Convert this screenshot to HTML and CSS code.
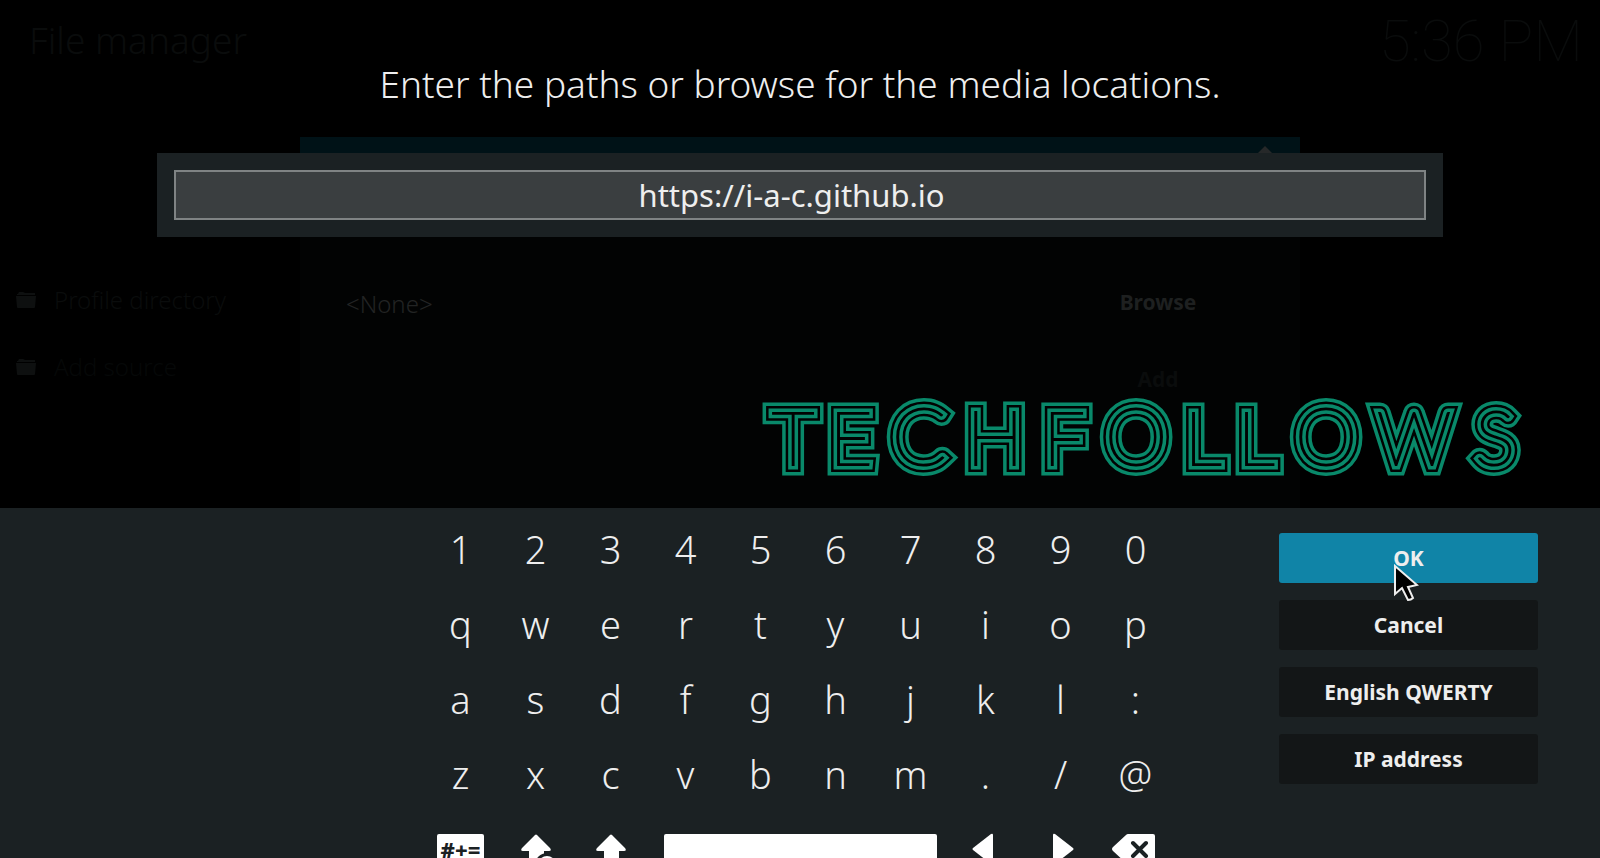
FILE: index.html
```html
<!DOCTYPE html>
<html lang="en">
<head>
    <meta charset="UTF-8">
    <meta name="viewport" content="width=device-width, initial-scale=1.0">
    <title>File manager</title>
    <link rel="stylesheet" href="styles.css">
</head>
<body>
    <!-- Dimmed file manager behind the keyboard -->
    <div class="backdrop">
        <header class="topbar">
            <div class="page-title">File manager</div>
            <div class="clock">5:36 PM</div>
        </header>
        <div class="files">
            <div class="file">
                <svg class="folder" viewBox="0 0 20 16"><path d="M2 2L3 0H7L9 1H19V3H1V2ZM0 4H20L19 15Q19 16 18 16H2Q1 16 1 15Z"/></svg>
                Profile directory
            </div>
            <div class="file dimmer">
                <svg class="folder" viewBox="0 0 20 16"><path d="M2 2L3 0H7L9 1H19V3H1V2ZM0 4H20L19 15Q19 16 18 16H2Q1 16 1 15Z"/></svg>
                Add source
            </div>
        </div>
        <div class="source-dialog">
            <div class="source-header">
                <svg class="source-arrow" viewBox="0 0 14 7"><path d="M0 7L7 0L14 7Z"/></svg>
            </div>
            <div class="source-body">
                <div class="source-path">&lt;None&gt;</div>
                <div class="source-actions">
                    <button class="source-button" type="button">Browse</button>
                    <button class="source-button add" type="button">Add</button>
                </div>
            </div>
        </div>
    </div>

    <main class="screen">
        <section class="entry">
            <label class="heading" for="path">Enter the paths or browse for the media locations.</label>
            <div class="input-panel">
                <input class="path-input" id="path" type="text" value="https://i-a-c.github.io">
            </div>
            <!-- Stacked strokes turn the thin letters into parallel lines -->
            <svg class="watermark" viewBox="0 0 770 90" role="img" aria-label="TECHFOLLOWS">
                <defs>
                    <text id="wordmark" y="70" x="33 91 159 235 304 376 443 496 566 654 735">TE<tspan class="round">C</tspan><tspan class="wide">H</tspan>F<tspan class="round">O</tspan>LL<tspan class="round">O</tspan>W<tspan class="wide">S</tspan></text>
                </defs>
                <use href="#wordmark" class="line" stroke-width="21"/>
                <use href="#wordmark" class="space" stroke-width="14"/>
                <use href="#wordmark" class="line" stroke-width="9"/>
                <use href="#wordmark" class="space" stroke-width="2"/>
            </svg>
        </section>

        <section class="keyboard">
            <div class="keys">
                <button class="key" type="button">1</button>
                <button class="key" type="button">2</button>
                <button class="key" type="button">3</button>
                <button class="key" type="button">4</button>
                <button class="key" type="button">5</button>
                <button class="key" type="button">6</button>
                <button class="key" type="button">7</button>
                <button class="key" type="button">8</button>
                <button class="key" type="button">9</button>
                <button class="key" type="button">0</button>

                <button class="key" type="button">q</button>
                <button class="key" type="button">w</button>
                <button class="key" type="button">e</button>
                <button class="key" type="button">r</button>
                <button class="key" type="button">t</button>
                <button class="key" type="button">y</button>
                <button class="key" type="button">u</button>
                <button class="key" type="button">i</button>
                <button class="key" type="button">o</button>
                <button class="key" type="button">p</button>

                <button class="key" type="button">a</button>
                <button class="key" type="button">s</button>
                <button class="key" type="button">d</button>
                <button class="key" type="button">f</button>
                <button class="key" type="button">g</button>
                <button class="key" type="button">h</button>
                <button class="key" type="button">j</button>
                <button class="key" type="button">k</button>
                <button class="key" type="button">l</button>
                <button class="key" type="button">:</button>

                <button class="key" type="button">z</button>
                <button class="key" type="button">x</button>
                <button class="key" type="button">c</button>
                <button class="key" type="button">v</button>
                <button class="key" type="button">b</button>
                <button class="key" type="button">n</button>
                <button class="key" type="button">m</button>
                <button class="key" type="button">.</button>
                <button class="key" type="button">/</button>
                <button class="key" type="button">@</button>

                <button class="key" type="button"><span class="symbols">#+=</span></button>
                <button class="key" type="button" aria-label="Caps lock">
                    <svg class="icon" viewBox="0 0 30 30">
                        <path d="M14 1Q15 0 16 1L29 14Q31 17 28 17H23V30H8V17H2Q-1 17 1 14Z"/>
                        <circle class="lock-edge" cx="26" cy="31" r="12"/>
                        <circle cx="26" cy="31" r="9"/>
                    </svg>
                </button>
                <button class="key" type="button" aria-label="Shift">
                    <svg class="icon" viewBox="0 0 30 30"><path d="M14 1Q15 0 16 1L29 14Q31 17 28 17H23V30H8V17H2Q-1 17 1 14Z"/></svg>
                </button>
                <button class="key space-key" type="button" aria-label="Space"><span class="space-bar"></span></button>
                <button class="key" type="button" aria-label="Left">
                    <svg class="icon" viewBox="0 0 30 30"><path d="M20 0Q22 -1 22 1V29Q22 31 20 30L2 16Q1 15 2 14Z"/></svg>
                </button>
                <button class="key" type="button" aria-label="Right">
                    <svg class="icon" viewBox="0 0 30 30"><path d="M9 0Q7 -1 7 1V29Q7 31 9 30L27 16Q28 15 27 14Z"/></svg>
                </button>
                <button class="key" type="button" aria-label="Backspace">
                    <svg class="icon backspace" viewBox="2 0 43 30">
                        <path d="M16 0H41Q43 0 43 2V28Q43 30 41 30H16Q15 30 14 29L1 17Q-1 15 1 13L14 1Q15 0 16 0Z"/>
                        <path class="cross" d="M21 9L34 22M34 9L21 22"/>
                    </svg>
                </button>
            </div>
            <div class="actions">
                <button class="action active" type="button">OK
                    <svg class="cursor" viewBox="0 0 26 38"><path d="M2 2V30L9 24L15 36Q18 36 20 34L15 23L24 21Z"/></svg>
                </button>
                <button class="action" type="button">Cancel</button>
                <button class="action" type="button">English QWERTY</button>
                <button class="action" type="button">IP address</button>
            </div>
        </section>
    </main>
</body>
</html>
```
FILE: styles.css
```css
* {
    box-sizing: border-box;
}
body {
    margin: 0;
    height: 100vh;
    overflow: hidden;
    position: relative;
    background-color: #000;
    color: #eee;
    font-family: "Noto Sans", sans-serif;
}
button {
    border: 0;
    padding: 0;
    background: none;
    color: inherit;
    font-family: inherit;
}

/* dimmed window */
.backdrop {
    position: absolute;
    inset: 0;
    color: #0a0c0c;
    font-weight: 300;
}
.topbar {
    display: flex;
    justify-content: space-between;
    padding: 0 17px 0 29px;
    height: 137px;
}
.page-title {
    font-size: 37px;
    line-height: 80px;
}
.clock {
    font-family: Roboto, sans-serif;
    font-size: 58px;
    font-weight: 100;
    line-height: 82px;
}
.files {
    padding: 129px 0 0 16px;
    width: 300px;
}
.file {
    display: flex;
    align-items: center;
    gap: 18px;
    height: 67px;
    font-size: 24px;
}
.file.dimmer {
    color: #060808;
}
.folder {
    width: 20px;
    height: 16px;
    fill: #0e1010;
}
.source-dialog {
    position: absolute;
    top: 137px;
    bottom: 0;
    left: 300px;
    right: 300px;
    background-color: #020303;
}
.source-header {
    height: 67px;
    padding: 9px 28px;
    background-color: #001217;
    text-align: right;
}
.source-arrow {
    display: block;
    width: 14px;
    height: 7px;
    margin-left: auto;
    fill: #262829;
}
.source-body {
    display: flex;
    justify-content: space-between;
    padding: 60px 36px 0 46px;
}
.source-path {
    color: #222424;
    font-size: 24px;
    line-height: 80px;
}
.source-actions {
    display: flex;
    flex-direction: column;
    gap: 1px;
    width: 212px;
}
.source-button {
    height: 76px;
    color: #1e2020;
    font-size: 21px;
    font-weight: 700;
}
.source-button.add {
    color: #0a0c0c;
}

/* keyboard dialog */
.screen {
    position: relative;
    display: flex;
    flex-direction: column;
    min-height: 100vh;
}
.entry {
    display: flex;
    flex-direction: column;
    height: 508px;
    padding-top: 57px;
}
.heading {
    font-size: 37px;
    font-weight: 350;
    line-height: 53px;
    text-align: center;
}
.input-panel {
    margin: 43px 157px 0;
    padding: 17px;
    background-color: #1b2123;
}
.path-input {
    display: block;
    width: 100%;
    height: 50px;
    padding: 0 17px 0 0;
    border: 2px solid #7f8384;
    background-color: #3a3e40;
    color: #eee;
    font-family: inherit;
    font-size: 31px;
    text-align: center;
    outline: 0;
}
.watermark {
    width: 770px;
    height: 90px;
    margin: auto 70px 23px auto;
    overflow: visible;
    font-family: Lato, sans-serif;
    font-size: 74px;
    font-weight: 100;
    text-anchor: middle;
    stroke-miterlimit: 2;
}
.round {
    font-size: 80px;
}
.wide {
    font-size: 76px;
}
.line {
    fill: #09896a;
    stroke: #09896a;
}
.space {
    fill: #010202;
    stroke: #010202;
}
.keyboard {
    flex: 1;
    display: grid;
    grid-template-columns: 1fr 750px 1fr;
    padding: 3px 4px 0 0;
    background-color: #1b2123;
}
.keys {
    grid-column: 2;
    display: grid;
    grid-template-columns: repeat(10, 1fr);
    grid-auto-rows: 75px;
}
.key {
    display: flex;
    align-items: center;
    justify-content: center;
    font-size: 38px;
    font-weight: 300;
}
.space-key {
    grid-column: span 4;
    padding-left: 5px;
}
.space-bar {
    width: 273px;
    height: 30px;
    border-radius: 2px;
    background-color: #fff;
}
.symbols {
    width: 47px;
    height: 30px;
    border-radius: 2px;
    background-color: #fff;
    color: #1b2123;
    font-size: 22px;
    font-weight: 800;
    line-height: 30px;
}
.icon {
    width: 30px;
    height: 30px;
    fill: #fff;
    overflow: visible;
}
.icon.backspace {
    width: 43px;
}
.lock-edge {
    fill: #1b2123;
}
.cross {
    stroke: #1b2123;
    stroke-width: 4;
    stroke-linecap: round;
}
.actions {
    display: flex;
    flex-direction: column;
    gap: 17px;
    padding: 22px 58px 0 106px;
}
.action {
    position: relative;
    height: 50px;
    border-radius: 3px;
    background-color: #131617;
    font-size: 21px;
    font-weight: 700;
}
.action.active {
    background-color: #1084a7;
}
.cursor {
    position: absolute;
    z-index: 1;
    top: 31px;
    left: 114px;
    width: 26px;
    height: 38px;
    fill: #000;
    stroke: #eee;
    stroke-width: 2;
}
```
